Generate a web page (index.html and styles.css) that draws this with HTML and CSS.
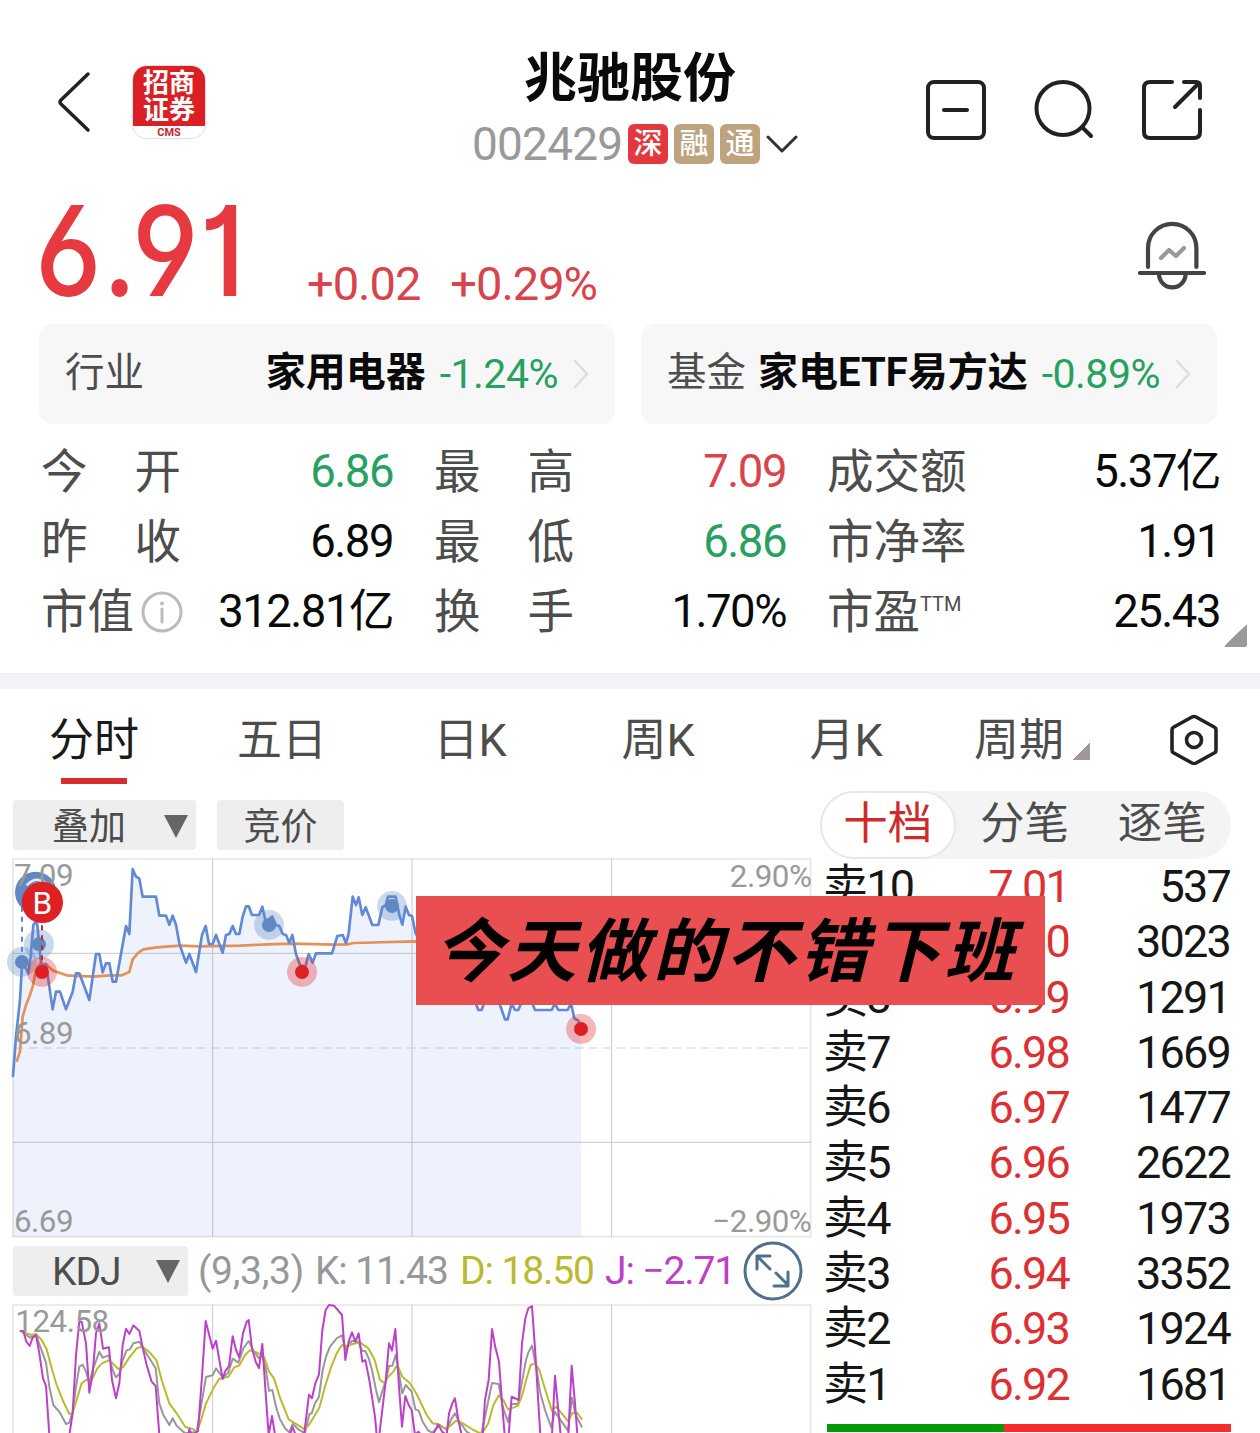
FILE: index.html
```html
<!DOCTYPE html>
<html lang="zh-CN">
<head>
  <meta charset="UTF-8">
  <meta name="viewport" content="width=device-width, initial-scale=1.0">
  <title>兆驰股份 002429</title>
  <link rel="stylesheet" href="styles.css">
</head>
<body>

  <header class="header">
    <div class="header-left">
      <svg class="back" width="34" height="62" viewBox="0 0 34 62"><path d="M31 3L4 29q-2 2 0 4L31 59"/></svg>
      <div class="logo">
        <div class="logo-name">招商<br>证券</div>
        <div class="logo-cms">CMS</div>
      </div>
    </div>
    <div class="title">
      <h1>兆驰股份</h1>
      <div class="code-row">
        <span class="code">002429</span>
        <span class="tag tag-red">深</span>
        <span class="tag">融</span>
        <span class="tag">通</span>
        <svg class="down" width="32" height="20" viewBox="0 0 32 20"><path d="M2 3L16 17L30 3"/></svg>
      </div>
    </div>
    <div class="header-icons">
      <svg width="60" height="60" viewBox="0 0 60 60"><rect x="2" y="2" width="56" height="56" rx="6"/><path d="M18 30H41"/></svg>
      <svg width="60" height="60" viewBox="0 0 60 60"><circle cx="29" cy="28.500" r="26.500"/><path d="M48 47L57 56"/></svg>
      <svg width="60" height="60" viewBox="0 0 60 60"><path d="M30 2H8Q2 2 2 8V52Q2 58 8 58H52Q58 58 58 52V30M42 2H54Q58 2 58 6V18M56 4L33 27"/></svg>
    </div>
  </header>

  <section class="price-row">
    <div class="price">6.91</div>
    <div class="change">+0.02</div>
    <div class="change">+0.29%</div>
    <svg class="bell" width="68" height="70" viewBox="0 0 68 70">
      <path d="M10 46V27a24.200 24.200 0 0 1 48.400 0V46M2 52H66M21 53a13.300 13.300 0 0 0 26.600 0"/>
      <path class="bell-line" d="M23 37L31 29L38 35L46 27"/>
    </svg>
  </section>

  <section class="cards">
    <div class="card">
      <span class="card-label">行业</span>
      <b>家用电器</b>
      <span class="card-pct green">-1.24%</span>
      <svg class="arrow" width="16" height="30" viewBox="0 0 16 30"><path d="M2 2L14 15L2 28"/></svg>
    </div>
    <div class="card">
      <span class="card-label">基金</span>
      <b>家电ETF易方达</b>
      <span class="card-pct green">-0.89%</span>
      <svg class="arrow" width="16" height="30" viewBox="0 0 16 30"><path d="M2 2L14 15L2 28"/></svg>
    </div>
  </section>

  <section class="stats">
    <div class="stat"><span class="wide">今开</span><em class="green">6.86</em></div>
    <div class="stat"><span class="wide">最高</span><em class="red">7.09</em></div>
    <div class="stat"><span>成交额</span><em>5.37亿</em></div>
    <div class="stat"><span class="wide">昨收</span><em>6.89</em></div>
    <div class="stat"><span class="wide">最低</span><em class="green">6.86</em></div>
    <div class="stat"><span>市净率</span><em>1.91</em></div>
    <div class="stat">
      <span>市值</span>
      <svg class="info" width="42" height="42" viewBox="0 0 42 42"><circle cx="21" cy="21" r="19"/><path d="M21 18V31"/><circle class="dot" cx="21" cy="12.500" r="2"/></svg>
      <em>312.81亿</em>
    </div>
    <div class="stat"><span class="wide">换手</span><em>1.70%</em></div>
    <div class="stat"><span>市盈</span><small>TTM</small><em>25.43</em></div>
    <i class="corner"></i>
  </section>

  <nav class="tabs">
    <span class="tab active">分时</span>
    <span class="tab">五日</span>
    <span class="tab">日K</span>
    <span class="tab">周K</span>
    <span class="tab">月K</span>
    <span class="tab more">周期</span>
    <svg class="setting" width="50" height="52" viewBox="0 0 50 52"><path d="M25 2.500Q26 2.500 27 3L46 13.500Q47 14 47 16V36Q47 38 46 38.500L27 49Q25 50 23 49L4 38.500Q3 38 3 36V16Q3 14 4 13.500L23 3Q24 2.500 25 2.500Z"/><circle cx="25" cy="26" r="7.500"/></svg>
  </nav>

  <main class="main">
    <div class="charts">
      <div class="tools">
        <button class="select">叠加<i></i></button>
        <button class="auction">竞价</button>
      </div>

      <!-- 分时: 3 chart units = 1px -->
      <svg class="chart" width="800" height="380" viewBox="36 24 2400 1140">
        <path class="frame" d="M39 27H2432V1160H39Z"/>
        <path class="grid" d="M638 27V1160M1236 27V1160M1835 27V1160M39 310H2432M39 877H2432"/>
        <path class="zero" d="M45 594H2432"/>
        <path class="area" d="M39 678L48 560L60 450L66 345L75 350L85 370L92 320L100 225L107 215L112 225L122 330L130 360L138 342L148 410L158 478L168 425L180 425L198 478L218 425L228 370L238 370L268 450L288 312L298 312L308 367L318 340L328 340L338 395L348 395L378 228L388 252L398 57L408 80L418 86L428 140L468 140L478 197L498 197L508 224L518 197L528 224L538 280L548 310L558 338L568 312L588 366L606 255L617 228L627 282L638 282L648 255L668 308L678 255L688 252L698 228L708 252L718 252L728 200L738 169L746 169L756 195L777 195L787 170L797 215L817 200L828 225L838 228L848 252L858 255L868 278L877 255L888 312L900 345L916 350L926 312L938 338L948 310H996L1012 258L1028 255L1038 280L1046 250L1058 140L1068 165L1076 142L1087 195L1097 172L1117 225H1135L1147 172L1157 165L1164 140H1187L1198 195L1207 224L1217 170L1227 195L1236 198L1247 250L1290 330L1340 300L1400 420L1428 462L1435 480H1445L1455 450H1495L1515 508H1523L1535 460L1545 480H1555L1565 455H1595L1605 480H1655L1665 460L1675 480H1703L1713 460L1723 505L1735 512L1743 537V1160H39Z"/>
        <path class="avg" d="M51 632L60 605L68 500L78 465L90 435L98 410L108 360L120 340L140 345L160 362L200 376L280 380L330 376L365 376L388 366L398 328L415 308L430 298L470 292L540 287L600 289L720 287L800 283L880 281L1000 284L1045 283L1060 279L1247 274L1300 276"/>
        <path class="price-line" d="M39 678L48 560L60 450L66 345L75 350L85 370L92 320L100 225L107 215L112 225L122 330L130 360L138 342L148 410L158 478L168 425L180 425L198 478L218 425L228 370L238 370L268 450L288 312L298 312L308 367L318 340L328 340L338 395L348 395L378 228L388 252L398 57L408 80L418 86L428 140L468 140L478 197L498 197L508 224L518 197L528 224L538 280L548 310L558 338L568 312L588 366L606 255L617 228L627 282L638 282L648 255L668 308L678 255L688 252L698 228L708 252L718 252L728 200L738 169L746 169L756 195L777 195L787 170L797 215L817 200L828 225L838 228L848 252L858 255L868 278L877 255L888 312L900 345L916 350L926 312L938 338L948 310H996L1012 258L1028 255L1038 280L1046 250L1058 140L1068 165L1076 142L1087 195L1097 172L1117 225H1135L1147 172L1157 165L1164 140H1187L1198 195L1207 224L1217 170L1227 195L1236 198L1247 250L1290 330L1340 300L1400 420L1428 462L1435 480H1445L1455 450H1495L1515 508H1523L1535 460L1545 480H1555L1565 455H1595L1605 480H1655L1665 460L1675 480H1703L1713 460L1723 505L1735 512L1743 537"/>

        <circle class="halo sell" cx="66" cy="336" r="45"/><circle class="sell" cx="66" cy="336" r="21"/>
        <circle class="halo sell" cx="117" cy="283" r="45"/><circle class="sell" cx="117" cy="283" r="21"/>
        <circle class="halo sell" cx="807" cy="225" r="45"/><circle class="sell" cx="807" cy="225" r="21"/>
        <circle class="halo sell" cx="1176" cy="168" r="45"/><circle class="sell" cx="1176" cy="168" r="21"/>
        <circle class="halo buy" cx="126" cy="366" r="45"/><circle class="buy" cx="126" cy="366" r="21"/>
        <circle class="halo buy" cx="906" cy="366" r="45"/><circle class="buy" cx="906" cy="366" r="21"/>
        <circle class="halo buy" cx="1743" cy="537" r="45"/><circle class="buy" cx="1743" cy="537" r="21"/>
        <path class="pin pin-sell" d="M66 170V320"/>
        <path class="pin pin-buy" d="M126 226V350"/>
        <circle class="sell" cx="107" cy="127" r="62"/>
        <path class="pin-hint" d="M82 104Q107 78 136 98"/>
        <text class="axis" x="42" y="109">7.09</text>
        <circle class="buy" cx="127" cy="157" r="62"/>
        <text class="mark" x="127" y="191">B</text>
        <text class="axis" x="42" y="581">6.89</text>
        <text class="axis" x="42" y="1145">6.69</text>
        <text class="axis end" x="2434" y="110">2.90%</text>
        <text class="axis end" x="2434" y="1145">−2.90%</text>
      </svg>

      <div class="kdj-row">
        <button class="select kdj">KDJ<i></i></button>
        <span class="params">(9,3,3)</span>
        <span class="k">K: 11.43</span>
        <span class="d">D: 18.50</span>
        <span class="j">J: −2.71</span>
        <svg class="expand" width="60" height="60" viewBox="0 0 60 60"><circle cx="30" cy="30" r="28"/><path d="M27 28L14 15M14 28V15H27M33 32L45 44M45 31V45H31"/></svg>
      </div>

      <svg class="chart" width="800" height="129" viewBox="36 222 2400 387">
        <path class="frame" d="M39 700V225H2432V700"/>
        <path class="grid" d="M638 225V700M1236 225V700M1835 225V700"/>
        <path class="line-k" d="M62 303L90 323L108 315L128 370L138 398L148 470L160 525L180 548L198 582L208 578L218 545L228 470L238 410L248 404L258 425L268 460L278 420L298 365L308 383L326 376L338 420L348 442L358 432L368 390L380 361L390 358L400 340L418 335L438 368L467 415L478 520L490 555L508 585L518 565L530 587L555 610L590 606L598 560L608 500L618 441L638 436L648 415L668 442L685 428L698 386L715 398L730 355L746 333L760 362L777 385L787 375L797 415L807 482L817 480L828 530L840 568L855 595L868 607L878 582L895 598L915 610L928 552L935 550L945 520L957 500L968 420L978 380L990 350L1010 325L1026 316L1036 360L1056 332L1076 337L1086 362L1096 363L1106 385L1116 420L1128 480L1137 517L1148 480L1157 455L1167 408L1177 407L1187 375L1197 430L1207 490L1217 465L1235 485L1246 538L1256 542L1268 575L1285 602L1297 608L1320 585L1340 600L1355 565L1365 550L1375 570L1400 605L1440 630L1455 560L1476 459L1496 462L1508 530L1524 576L1535 522L1554 522L1566 455L1578 390L1586 365L1596 347L1610 420L1620 485L1635 540L1654 593L1664 545L1685 575L1704 602L1716 503L1727 555L1745 590"/>
        <path class="line-d" d="M62 303L80 310L95 315L108 312L125 330L140 358L155 415L170 465L190 515L208 552L218 550L228 515L245 460L258 450L275 450L292 415L306 400L328 390L342 404L355 417L368 413L390 380L410 355L428 350L448 366L470 392L485 450L508 520L530 550L556 591L575 596L590 604L602 575L618 520L640 475L658 446L685 440L703 412L718 406L735 375L750 361L768 366L792 380L807 425L822 445L840 503L866 568L885 580L915 598L930 580L958 533L975 470L992 415L1010 370L1026 345L1040 348L1058 342L1080 337L1105 355L1124 390L1140 450L1155 460L1163 443L1180 425L1188 410L1195 412L1207 440L1230 460L1250 492L1280 555L1298 580L1315 583L1335 595L1348 590L1368 572L1385 578L1420 600L1445 612L1465 580L1480 525L1496 497L1510 510L1524 538L1542 532L1554 527L1566 497L1580 445L1592 405L1605 400L1618 420L1636 480L1656 543L1668 530L1685 550L1704 573L1718 548L1732 549L1745 567"/>
        <path class="line-j" d="M62 303H70L79 335L89 348L98 323L108 315L118 370L129 445L138 468L148 615H208L218 550L228 375L238 275H245L258 340L268 488L278 430L288 310L298 280L309 356L327 352L336 450L348 505L358 460L368 345L378 296L388 312L400 286L418 303L428 352L440 405L455 455L467 468L478 615H565L568 598L576 615L594 603L607 425L617 273L638 356L648 332L658 390L668 447L675 425L687 408L698 319L708 360L718 383L729 310L740 275L746 270L756 355L767 395L777 414L787 342L797 490L806 615L816 558L825 615H870L877 590L887 615H912L927 494L936 505L946 460L957 433L967 300L977 240L987 225L1002 227L1026 255L1036 390L1046 335L1056 307L1066 335L1076 310L1087 395L1096 390L1108 450L1125 560L1130 615H1138L1157 455L1167 340L1176 362L1186 297L1197 470L1206 590L1216 498L1226 525L1235 540L1245 615L1255 605L1264 615H1298L1315 583L1326 605L1340 615L1347 550L1357 520L1365 505L1375 570L1385 615H1448L1455 510L1466 450L1476 297L1486 352L1497 395L1507 530L1514 615H1526L1535 500L1556 510L1566 340L1576 265L1585 235L1596 228L1606 370L1617 550L1621 615H1656L1665 437L1682 615H1705L1715 407L1725 520L1732 615"/>
        <text class="axis" x="46" y="307">124.58</text>
      </svg>
    </div>

    <aside class="book">
      <div class="switch">
        <span class="on">十档</span>
        <span>分笔</span>
        <span>逐笔</span>
      </div>
      <div class="rows">
        <div class="row"><span>卖10</span><span class="p">7.01</span><span>537</span></div>
        <div class="row"><span>卖9</span><span class="p">7.00</span><span>3023</span></div>
        <div class="row"><span>卖8</span><span class="p">6.99</span><span>1291</span></div>
        <div class="row"><span>卖7</span><span class="p">6.98</span><span>1669</span></div>
        <div class="row"><span>卖6</span><span class="p">6.97</span><span>1477</span></div>
        <div class="row"><span>卖5</span><span class="p">6.96</span><span>2622</span></div>
        <div class="row"><span>卖4</span><span class="p">6.95</span><span>1973</span></div>
        <div class="row"><span>卖3</span><span class="p">6.94</span><span>3352</span></div>
        <div class="row"><span>卖2</span><span class="p">6.93</span><span>1924</span></div>
        <div class="row"><span>卖1</span><span class="p">6.92</span><span>1681</span></div>
      </div>
      <div class="ratio"><i style="width: 43.8%"></i></div>
    </aside>

    <div class="banner">今天做的不错下班</div>
  </main>

</body>
</html>
```
FILE: styles.css
```css
* {
  box-sizing: border-box;
}

body {
  margin: 0;
  width: 1260px;
  height: 1433px;
  overflow: hidden;
  background: #fff;
  color: #0a0a0a;
  font-family: Roboto, 'Noto Sans CJK SC', sans-serif;
}

svg {
  display: block;
  flex: none;
  fill: none;
  stroke-linecap: round;
  stroke-linejoin: round;
}

em, i {
  font-style: normal;
}

.red { color: #d9434a; }
.green { color: #27a060; }

/* header */
.header {
  display: grid;
  grid-template-columns: 465px 330px 1fr;
  height: 190px;
}

.header-left {
  display: flex;
  align-items: flex-start;
  padding: 66px 0 0 57px;
}

.back {
  margin: 5px 42px 0 0;
  stroke: #222;
  stroke-width: 3.500;
}

.logo {
  width: 72px;
  height: 72px;
  border-radius: 14px;
  overflow: hidden;
  background: #fff;
  box-shadow: 0 0 1px 1px #ddd;
  text-align: center;
}

.logo-name {
  height: 60px;
  padding-top: 4px;
  background: #da2024;
  color: #fff;
  font-size: 26px;
  line-height: 27px;
  font-weight: 700;
}

.logo-cms {
  color: #c5282c;
  font-size: 11px;
  line-height: 13px;
  font-weight: 700;
}

.title h1 {
  margin: 44px 0 0;
  font-size: 53px;
  line-height: 70px;
  font-weight: 700;
  text-align: center;
}

.code-row {
  display: flex;
  align-items: center;
  height: 60px;
  padding-left: 7px;
}

.code {
  flex: none;
  width: 156px;
  color: #999;
  font-size: 46px;
  letter-spacing: -0.800px;
}

.tag {
  flex: none;
  width: 40px;
  height: 40px;
  margin-right: 6px;
  border-radius: 6px;
  background: #bda47e;
  color: #fff;
  font-size: 29px;
  line-height: 40px;
  font-weight: 500;
  text-align: center;
}

.tag-red { background: #e3383e; }

.down {
  stroke: #333;
  stroke-width: 3;
}

.header-icons {
  display: flex;
  gap: 48px;
  padding: 80px 0 0 131px;
  stroke: #222;
  stroke-width: 4;
}

/* price */
.price-row {
  display: flex;
  align-items: flex-start;
  height: 134px;
  padding-left: 35px;
  color: #d9434a;
}

.price {
  width: 272px;
  color: #e73a40;
  font-family: Inter, Roboto, sans-serif;
  font-feature-settings: 'cv01', 'cv03', 'cv04';
  font-size: 125px;
  line-height: 122px;
  font-weight: 500;
  letter-spacing: 1px;
  transform: scaleX(0.900);
  transform-origin: left;
}

.change {
  margin: 64px 30px 0 0;
  font-size: 47px;
  line-height: 60px;
  letter-spacing: -1px;
}

.bell {
  margin: 31px 54px 0 auto;
  stroke: #444;
  stroke-width: 4.200;
}

.bell-line { stroke: #999; }

/* cards */
.cards {
  display: flex;
  gap: 26px;
  padding-left: 39px;
}

.card {
  display: flex;
  align-items: center;
  width: 576px;
  height: 100px;
  padding: 0 26px;
  border-radius: 14px;
  background: #f7f7f7;
  font-size: 39.500px;
  line-height: 50px;
  white-space: nowrap;
}

.card-label,
.card b { padding-bottom: 2px; }

.card-label { color: #4d4d4d; }

.card b {
  margin-left: auto;
  font-size: 40px;
}

.card-pct {
  margin: 0 15px 0 14px;
  font-size: 41px;
  letter-spacing: -0.500px;
}

.arrow {
  stroke: #ddd;
  stroke-width: 2.500;
}

/* stats */
.stats {
  position: relative;
  display: grid;
  grid-template-columns: 352px 352px 393px;
  column-gap: 41px;
  grid-auto-rows: 70px;
  height: 249px;
  padding: 13px 0 0 41px;
}

.stat {
  display: flex;
  align-items: center;
  font-size: 46.500px;
  line-height: 70px;
  color: #4d4d4d;
  white-space: nowrap;
}

.wide { letter-spacing: 47px; }

.stat em {
  margin-left: auto;
  color: #0a0a0a;
  font-size: 45.500px;
  letter-spacing: -1.500px;
}

.stat em.green { color: #27a060; }
.stat em.red { color: #d9434a; }

.stat small {
  margin-top: -16px;
  font-size: 20px;
  line-height: 24px;
}

.info {
  margin-left: 7px;
  stroke: #bbb;
  stroke-width: 3;
}

.info .dot {
  fill: #bbb;
  stroke: none;
}

.corner {
  position: absolute;
  right: 13px;
  bottom: 26px;
  width: 23px;
  height: 24px;
  background: linear-gradient(136deg, transparent 50%, #999 51%);
  border-radius: 2px;
}

/* period tabs */
.tabs {
  display: flex;
  height: 111px;
  border-top: 16px solid #f1f3f6;
  color: #4d4d4d;
  font-size: 45px;
  line-height: 104px;
}

.tab {
  position: relative;
  width: 188px;
  text-align: center;
}

.active { color: #1a1a1a; }

.active::after {
  content: '';
  position: absolute;
  left: 61px;
  top: 89px;
  width: 66px;
  height: 6px;
  background: #d72d2d;
}

.more { width: 158px; }

.more::after {
  content: '';
  position: absolute;
  right: 8px;
  top: 53px;
  width: 18px;
  height: 18px;
  background: linear-gradient(135deg, transparent 50%, #a09898 51%);
}

.setting {
  margin: 25px 0 0 71px;
  stroke: #222;
  stroke-width: 3.600;
}

/* main */
.main {
  position: relative;
  display: flex;
  padding-left: 12px;
}

.charts { width: 808px; }

.tools {
  display: flex;
  gap: 21px;
  height: 74px;
  padding: 16px 0 0 1px;
}

button {
  height: 50px;
  padding: 5px 0 0;
  border: 0;
  border-radius: 4px;
  background: #eee;
  color: #4d4d4d;
  font: 37px/45px Roboto, 'Noto Sans CJK SC', sans-serif;
}

.select {
  display: flex;
  align-items: center;
  justify-content: space-between;
  width: 183px;
  padding: 5px 8px 0 39px;
}

.select i {
  margin-top: -3px;
  border: 12px solid transparent;
  border-top: 23px solid #666;
  border-bottom: 0;
}

.auction { width: 127px; }

.chart { overflow: visible; }

.frame {
  stroke: #e6e6e6;
  stroke-width: 5;
}

.grid {
  stroke: #c8c8cc;
  stroke-width: 3;
}

.zero {
  stroke: #dcdfe5;
  stroke-width: 5;
  stroke-dasharray: 26 16;
  stroke-linecap: butt;
}

.area { fill: rgba(84, 130, 240, 0.100); }

.price-line {
  stroke: #6189d6;
  stroke-width: 8;
}

.avg {
  stroke: #e39256;
  stroke-width: 8;
}

.sell { fill: #5e89c3; }
.buy { fill: #df2023; }
.halo { opacity: 0.320; }

.pin {
  stroke-width: 6;
  stroke-dasharray: 15 15;
  stroke-linecap: butt;
}

.pin-sell { stroke: #5e89c3; }
.pin-buy { stroke: #b72c3c; }

.pin-hint {
  stroke: #e4ebf5;
  stroke-width: 7;
}

.axis {
  fill: #999;
  font-size: 94px;
  letter-spacing: -1.500px;
}

.end { text-anchor: end; }

.mark {
  fill: #fff;
  font-size: 95px;
  text-anchor: middle;
}

.kdj-row {
  display: flex;
  align-items: center;
  height: 66px;
  padding-left: 1px;
  font-size: 39px;
  letter-spacing: -1.100px;
  white-space: nowrap;
}

.kdj {
  width: 175px;
  padding-top: 2px;
  font-size: 39px;
  letter-spacing: -1px;
}

.kdj i { margin-top: -2px; }

.params {
  width: 117px;
  margin-left: 10px;
  color: #98989b;
  letter-spacing: -0.300px;
}

.k {
  width: 145px;
  color: #98989b;
}

.d {
  width: 145px;
  color: #bcb92f;
}

.j {
  width: 138px;
  color: #bd40c8;
}

.expand {
  stroke: #4f6f8e;
  stroke-width: 3;
}

.line-k, .line-d, .line-j { stroke-width: 6; }
.line-k { stroke: #98989b; }
.line-d { stroke: #bcb92f; }
.line-j { stroke: #bd40c8; }

/* order book */
.book {
  width: 411px;
  padding-top: 7px;
}

.switch {
  display: flex;
  width: 411px;
  height: 68px;
  border-radius: 34px;
  background: #f4f4f4;
  color: #4d4d4d;
  font-size: 44.500px;
  line-height: 67px;
  text-align: center;
}

.switch span { width: 138px; }

.switch .on {
  width: 136px;
  border: 2px solid #e8e8e8;
  border-radius: 34px;
  background: #fff;
  color: #d02a2a;
  line-height: 63px;
}

.row {
  display: grid;
  grid-template-columns: 110px 136px 161px;
  height: 55.300px;
  margin-left: 3px;
  font-size: 45px;
  line-height: 55px;
  letter-spacing: -1.800px;
  color: #161616;
}

.row span + span { text-align: right; }
.row .p { color: #dc3033; }

.ratio {
  height: 8px;
  margin: 12px 0 0 7px;
  background: #f82c2c;
}

.ratio i {
  display: block;
  height: 8px;
  background: #069a06;
}

.banner {
  position: absolute;
  left: 416px;
  top: 112px;
  width: 629px;
  height: 109px;
  padding-left: 18px;
  background: #e94f51;
  color: #000;
  font-size: 69px;
  line-height: 113px;
  font-weight: 700;
  font-style: italic;
  letter-spacing: 4px;
  white-space: nowrap;
  overflow: hidden;
}
```
